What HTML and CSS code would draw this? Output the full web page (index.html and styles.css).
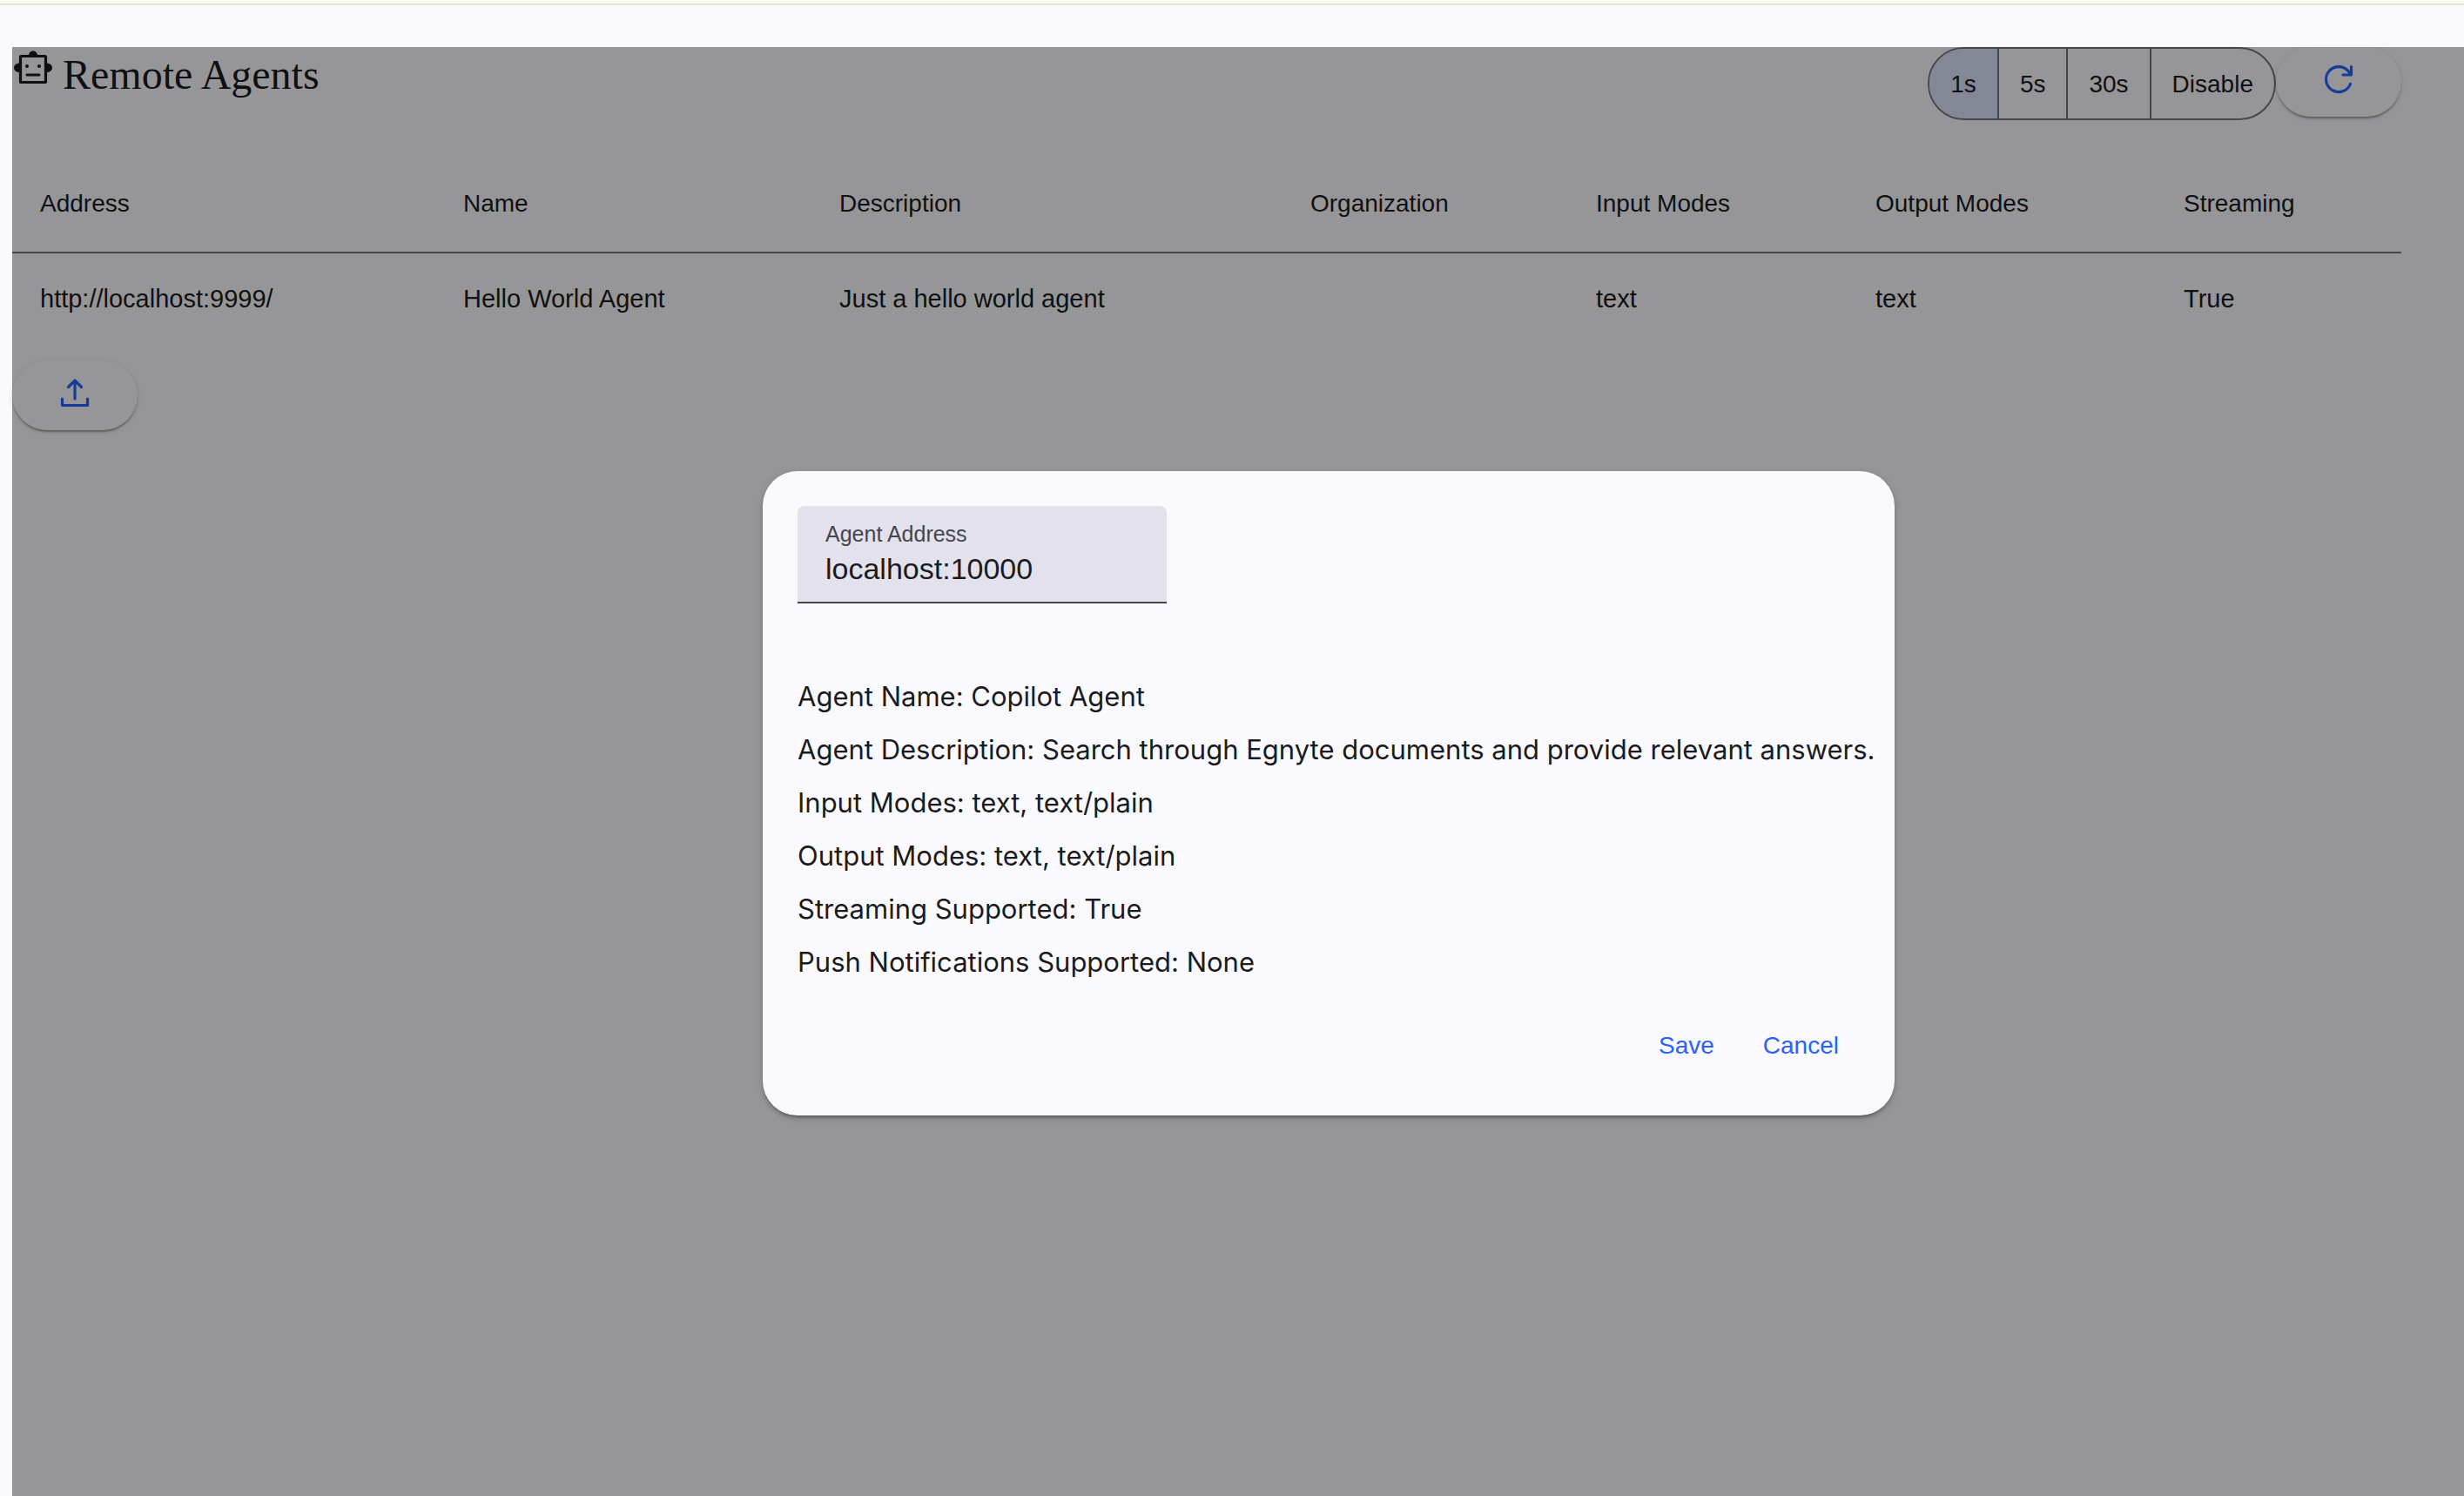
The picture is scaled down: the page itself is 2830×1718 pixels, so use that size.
FILE: index.html
```html
<!DOCTYPE html>
<html lang="en">
<head>
<meta charset="utf-8">
<title>Remote Agents</title>
<link rel="stylesheet" href="styles.css">
</head>
<body>
<div class="top-strip"></div>
<div class="page">
  <main class="content">
    <header class="header">
      <div class="heading">
        <svg class="icon" viewBox="0 0 48 48" aria-hidden="true">
          <path fill="currentColor" d="M19 9.500a5 5 0 0 1 10 0zM8 18.500v10.500a6 5.250 0 0 1 0-10.500zM40 18.500v10.500a6 5.250 0 0 0 0-10.500z"/>
          <rect x="9.500" y="10.500" width="29" height="30" rx="1" fill="none" stroke="currentColor" stroke-width="3.200"/>
          <circle cx="17" cy="22" r="2" fill="currentColor"/><circle cx="31" cy="22" r="2" fill="currentColor"/>
          <path d="M17 32h14" stroke="currentColor" stroke-width="3" stroke-linecap="round"/>
        </svg>
        <h1 class="title">Remote Agents</h1>
      </div>
      <div class="controls">
        <div class="toggle" role="group" aria-label="Refresh interval">
          <button class="toggle-item selected" type="button">1s</button>
          <button class="toggle-item" type="button">5s</button>
          <button class="toggle-item" type="button">30s</button>
          <button class="toggle-item" type="button">Disable</button>
        </div>
        <button class="raised" type="button" aria-label="Refresh">
          <svg class="icon" viewBox="0 0 48 48" aria-hidden="true"><path fill="none" stroke="currentColor" stroke-width="3.200" stroke-linecap="round" stroke-linejoin="round" d="M37.500 29.500A14.500 14.500 0 1 1 34.500 14L38.500 19M38.500 9.500V19H29"/></svg>
        </button>
      </div>
    </header>
    <table class="agents">
      <colgroup><col class="c-address"><col class="c-name"><col class="c-description"><col class="c-organization"><col class="c-input"><col class="c-output"><col></colgroup>
      <thead>
        <tr><th>Address</th><th>Name</th><th>Description</th><th>Organization</th><th>Input Modes</th><th>Output Modes</th><th>Streaming</th></tr>
      </thead>
      <tbody>
        <tr><td>http://localhost:9999/</td><td>Hello World Agent</td><td>Just a hello world agent</td><td></td><td>text</td><td>text</td><td>True</td></tr>
      </tbody>
    </table>
    <button class="raised" type="button" aria-label="Add agent">
      <svg class="icon" viewBox="0 0 48 48" aria-hidden="true"><path fill="none" stroke="currentColor" stroke-width="3.200" stroke-linecap="round" stroke-linejoin="round" d="M24 31V10M16.500 17.500l7.500-7.500 7.500 7.500M9.500 31v7.500h29V31"/></svg>
    </button>
  </main>
  <div class="backdrop">
    <section class="dialog" role="dialog" aria-label="Add agent">
      <div class="field">
        <label class="field-label" for="address">Agent Address</label>
        <input class="field-input" id="address" type="text" value="localhost:10000">
      </div>
      <div class="details">
        <p>Agent Name: Copilot Agent</p>
        <p>Agent Description: Search through Egnyte documents and provide relevant answers.</p>
        <p>Input Modes: text, text/plain</p>
        <p>Output Modes: text, text/plain</p>
        <p>Streaming Supported: True</p>
        <p>Push Notifications Supported: None</p>
      </div>
      <div class="actions">
        <button class="text-button" type="button">Save</button>
        <button class="text-button" type="button">Cancel</button>
      </div>
    </section>
  </div>
</div>
</body>
</html>
```
FILE: styles.css
```css
* { box-sizing: border-box; }

body {
  margin: 0;
  min-height: 100vh;
  display: flex;
  flex-direction: column;
  background: #faf9fd;
  color: #1a1b1f;
  font-family: "Liberation Sans", Arial, sans-serif;
  font-size: 28px;
  line-height: 40px;
}

button { font: inherit; color: inherit; margin: 0; border: 0; }

.top-strip {
  height: 6px;
  background: #fafaf0;
  border-bottom: 2px solid #e2e3d9;
}

.page {
  position: relative;
  flex: 1;
  margin: 48px 0 0 14px;
}

.content { padding-right: 72px; }

.header {
  display: flex;
  justify-content: space-between;
  align-items: flex-start;
  margin-bottom: 40px;
}

.heading { display: flex; gap: 10px; }

.icon { display: block; width: 48px; height: 48px; flex: none; }

.title {
  margin: 0;
  font: 400 48px/64px "Liberation Serif", "Times New Roman", serif;
}

.controls { display: flex; }

.toggle {
  display: flex;
  height: 84px;
  border: 2px solid #757780;
  border-radius: 42px;
  overflow: hidden;
}

.toggle-item { padding: 2px 24px 0; background: none; }
.toggle-item + .toggle-item { border-left: 2px solid #757780; }
.selected { background: #dde1f9; }

.raised {
  display: flex;
  justify-content: center;
  width: 144px;
  height: 80px;
  padding: 13px 0 0;
  border-radius: 40px;
  background: #faf9fd;
  color: #2962ff;
  box-shadow: 0 4px 2px -2px rgba(0, 0, 0, .2), 0 2px 2px rgba(0, 0, 0, .14), 0 2px 6px rgba(0, 0, 0, .12);
}

.agents {
  width: 100%;
  margin-bottom: 20px;
  border-collapse: collapse;
  table-layout: fixed;
}

.agents th, .agents td { padding: 0 32px; text-align: left; font-weight: 400; }
.agents th { height: 112px; border-bottom: 2px solid #757780; }
.agents td { height: 104px; font-size: 29px; }

.c-address { width: 486px; }
.c-name { width: 432px; }
.c-description { width: 541px; }
.c-organization { width: 328px; }
.c-input { width: 321px; }
.c-output { width: 354px; }

.backdrop {
  position: absolute;
  inset: 0;
  display: flex;
  align-items: center;
  justify-content: center;
  padding: 50px 0 0 208px;
  background: rgba(0, 0, 0, .4);
}

.dialog {
  width: 1300px;
  max-width: 90%;
  padding: 40px;
  border-radius: 40px;
  background: #faf9fd;
  box-shadow: 0 6px 2px -4px rgba(0, 0, 0, .2), 0 4px 4px rgba(0, 0, 0, .14), 0 2px 10px rgba(0, 0, 0, .12);
}

.field {
  display: flex;
  flex-direction: column;
  width: 424px;
  height: 112px;
  padding: 16px 32px 0;
  border-bottom: 2px solid #44464f;
  border-radius: 8px 8px 0 0;
  background: #e2e1ec;
}

.field-label { color: #44464f; font-size: 25px; line-height: 32px; }

.field-input {
  width: 100%;
  height: 48px;
  padding: 0;
  border: 0;
  outline: 0;
  background: none;
  color: #1a1b1f;
  font: 34px/48px "Liberation Sans", Arial, sans-serif;
}

.details {
  margin-top: 76px;
  font: 31px/61px Inter, sans-serif;
  white-space: nowrap;
}

.details p { margin: 0; }

.actions {
  display: flex;
  justify-content: flex-end;
  gap: 8px;
  margin-top: 26px;
}

.text-button { height: 80px; padding: 0 24px; background: none; color: #2962ff; }
```
